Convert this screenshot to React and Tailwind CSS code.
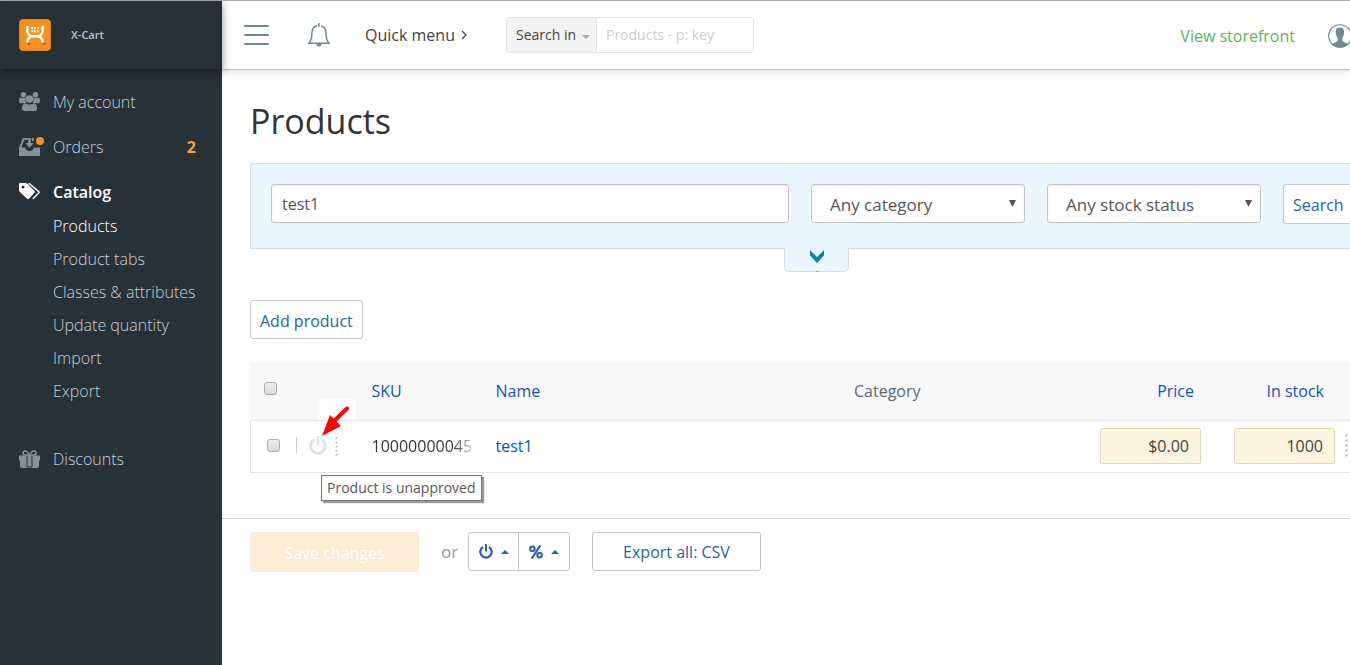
import React from "react";

const subItems = ["Product tabs", "Classes & attributes", "Update quantity", "Import", "Export"];

function Logo() {
  return (
    <svg viewBox="0 0 32 32" className="size-8 shrink-0" aria-hidden="true">
      <rect x="0.5" y="0.5" width="31" height="31" rx="3.5" fill="#f69320" stroke="#d9862a" />
      <g fill="none" stroke="#fff" strokeWidth="2.4">
        <path d="M8.400 7v5Q8.600 16.500 13 17.200 8.600 18.500 8.400 23.500M23.600 7v5Q23.400 16.500 19 17.200 23.400 18.500 23.600 23.500" />
        <path d="M11 17.200h10" />
      </g>
      <path d="M12.200 9h7.700M12.200 12.200h7.700" stroke="#fff" strokeWidth="2" strokeDasharray="1.900 1" />
      <path d="M9.800 25h.6M24.600 25h.6" stroke="#c8452b" strokeWidth="2" strokeLinecap="round" />
    </svg>
  );
}

function PeopleIcon() {
  return (
    <svg viewBox="0 0 21 19" className="h-[19px] w-[21px]" fill="currentColor" aria-hidden="true">
      <circle cx="4.500" cy="2.800" r="2.700" />
      <circle cx="16.500" cy="2.800" r="2.700" />
      <path d="M0 8.500Q0 5.500 2 5.500q2.200 1 4.300 0 .3.300.3.800-.6 3.200 1 5H1.500Q0 11.300 0 8.500zM21 8.500Q21 5.500 19 5.500q-2.200 1-4.300 0-.3.300-.3.800.6 3.200-1 5h6.100q1.500 0 1.500-2.800z" />
      <circle cx="10.500" cy="7" r="3.800" />
      <path d="M3 16.500q0-4.700 2.800-5 4.700 2.300 9.400 0 2.800.3 2.800 5 0 2.500-2.300 2.500H5.300Q3 19 3 16.500z" />
    </svg>
  );
}

function OrdersIcon() {
  return (
    <svg viewBox="0 0 25 19" className="h-[19px] w-[25px]" aria-hidden="true">
      <path d="M0 19v-8.500L4 1h5v1.800H5.300L2.300 10.500h3.900q1 3.500 4.300 3.500t4.300-3.500H21V19z" fill="#87909a" />
      <path d="M9.200 1h2.600v5h2.900l-4.200 5-4.200-5h2.900zM12.800 1h2v3h-2z" fill="#87909a" />
      <circle cx="21" cy="4" r="4" fill="#f69320" />
    </svg>
  );
}

function TagsIcon() {
  return (
    <svg viewBox="0 0 21 17" className="h-[17px] w-[21px]" aria-hidden="true">
      <path fillRule="evenodd" fill="#fff" d="M0 1.200Q0 0 1.200 0h5.300q1 0 1.800.8l7.100 7q1 1 0 2l-5.500 6q-.8.900-1.800 0L.8 8.900Q0 8 0 7zM4 2.400a1.500 1.500 0 100 3 1.500 1.500 0 000-3z" />
      <path fill="none" stroke="#fff" strokeWidth="1.400" d="M9.500.7h.8l9.300 7.700q.9.800.1 1.700l-5.900 6" />
    </svg>
  );
}

function GiftIcon() {
  return (
    <svg viewBox="0 0 21 18" className="h-[18px] w-[21px]" aria-hidden="true">
      <path d="M0 5.500h21v5h-1V16q0 2-2 2H3q-2 0-2-2v-5.500H0z" fill="#87909a" />
      <path d="M8 6v11h5V6" fill="none" stroke="#263238" strokeWidth="1" />
      <path d="M9.500 5.300Q3.800 5.500 4 2.800 4.500.5 6.800 1q2 .6 3.700 4.300Q12.200 1.600 14.200 1q2.300-.5 2.800 1.800.2 2.700-5.500 2.500" fill="none" stroke="#87909a" strokeWidth="1.600" />
    </svg>
  );
}

function BellIcon() {
  return (
    <svg viewBox="0 0 22 24" className="h-6 w-[22px]" fill="none" stroke="#6f8893" strokeWidth="1.500" aria-hidden="true">
      <path d="M9 2.700Q4.200 4 4 9.500 4 17.500.8 20.200h20.400Q18 17.500 18 9.500 17.800 4 13.200 2.900M11 0v3.800" />
      <path d="M8.300 20.500h5.400q-.5 3-2.700 3t-2.700-3z" fill="#6f8893" stroke="none" />
    </svg>
  );
}

function AvatarIcon() {
  return (
    <svg viewBox="0 0 24 24" className="size-6 shrink-0" aria-hidden="true">
      <circle cx="12" cy="12" r="11.300" fill="#fff" stroke="#6f8893" strokeWidth="1.100" />
      <path d="M7.600 7.500Q7.800 3.600 11.800 3.600t4.300 3.900q.3 3.800-1.800 6.500v2.700q1 1.300 6 3A11.300 11.300 0 0112 23.300a11.300 11.300 0 01-8.300-3.600q4.900-1.700 5.900-3V14Q7.400 11.300 7.600 7.500z" fill="#6f8893" />
    </svg>
  );
}

function PowerIcon({ className }) {
  return (
    <svg viewBox="0 0 18 19" className={className} fill="none" stroke="currentColor" aria-hidden="true">
      <path d="M5.200 3.800A7.300 7.300 0 1012.800 3.800" strokeWidth="2.900" />
      <path d="M9 0v9.500" strokeWidth="2.600" />
    </svg>
  );
}

function PercentIcon() {
  return (
    <svg viewBox="0 0 14 14" className="size-[14px]" fill="none" stroke="currentColor" aria-hidden="true">
      <circle cx="3.400" cy="3.700" r="2.300" strokeWidth="2" />
      <circle cx="10.600" cy="10.300" r="2.300" strokeWidth="2" />
      <path d="M11.300.5L2.700 13.500" strokeWidth="2.200" />
    </svg>
  );
}

function CaretUp() {
  return (
    <svg viewBox="0 0 8 4" className="h-1 w-2" fill="currentColor" aria-hidden="true">
      <path d="M0 4l4-4 4 4z" />
    </svg>
  );
}

function Dots({ className }) {
  return (
    <svg viewBox="0 0 3 24" className={className} stroke="#a9b0b4" strokeWidth="1.300" aria-hidden="true">
      <path d="M.5 2.500l2-2M.5 7.500l2-2M.5 12.500l2-2M.5 17.500l2-2M.5 22.500l2-2" />
    </svg>
  );
}

function FilterSelect({ label }) {
  return (
    <div className="relative w-[214px] shrink-0">
      <select
        aria-label={label}
        className="h-[39px] w-full appearance-none rounded-[3px] border border-[#c4c4c4] bg-white pt-[2px] pl-[18px] text-[17px] text-[#555] shadow-[inset_0_1px_2px_rgba(0,0,0,0.08)]"
      >
        <option>{label}</option>
      </select>
      <svg viewBox="0 0 7 7" className="pointer-events-none absolute top-4 right-[9px] size-[7px]" fill="#555" aria-hidden="true">
        <path d="M0 0h7L3.500 7z" />
      </svg>
    </div>
  );
}

const checkbox =
  "block size-[13px] appearance-none rounded-[3px] border border-[#acacac] bg-linear-to-b from-[#eeeeee] to-[#dadada]";
const cellInput =
  "block h-9 w-[101px] rounded-[2px] border border-[#e0dab8] bg-[#faf5dc] pr-[11px] text-right text-base text-[#444]";

function Sidebar() {
  return (
    <aside className="w-[222px] shrink-0 bg-[#263238] text-base font-light text-[#c5d0d6]">
      <div className="flex h-[68px] items-center gap-5 pl-[19px] text-[11px] font-semibold text-[#b7c3c9] shadow-[0_3px_8px_rgba(0,0,0,0.45)]">
        <Logo />
        <span>X-Cart</span>
      </div>
      <nav className="pt-[10px]">
        <a href="#account" className="flex h-[45px] items-center pl-[19px] text-[#87909a]">
          <span className="w-[34px]"><PeopleIcon /></span>
          <span className="text-[#c5d0d6]">My account</span>
        </a>
        <a href="#orders" className="flex h-[45px] items-center pr-[26px] pl-[19px]">
          <span className="w-[34px]"><OrdersIcon /></span>
          <span>Orders</span>
          <span className="ml-auto font-bold text-[#f9a13f]">2</span>
        </a>
        <a href="#catalog" className="flex h-[45px] items-center pl-[19px] font-semibold text-white">
          <span className="w-[34px]"><TagsIcon /></span>
          <span>Catalog</span>
        </a>
        <ul className="-mt-[5px] pl-[53px]">
          <li>
            <a href="#products" className="flex h-[33px] items-center text-white">Products</a>
          </li>
          {subItems.map((item) => (
            <li key={item}>
              <a href="#catalog" className="flex h-[33px] items-center">{item}</a>
            </li>
          ))}
        </ul>
        <a href="#discounts" className="mt-[29px] flex h-[45px] items-center pl-[19px]">
          <span className="w-[34px]"><GiftIcon /></span>
          <span>Discounts</span>
        </a>
      </nav>
    </aside>
  );
}

function Header() {
  return (
    <header className="flex h-[69px] items-center border-b border-[#b9b9b9] pl-[22px] shadow-[0_2px_8px_rgba(0,0,0,0.12)]">
      <button aria-label="Toggle menu" className="mr-[39px]">
        <svg viewBox="0 0 25 20" className="h-5 w-[25px]" stroke="#6f8893" strokeWidth="2" strokeLinecap="round" aria-hidden="true">
          <path d="M1 1h23M1 10h23M1 19h23" />
        </svg>
      </button>
      <button aria-label="Notifications" className="mr-[35px]"><BellIcon /></button>
      <button className="mr-[39px] flex items-center gap-[6px] text-base text-[#444]">
        Quick menu
        <svg viewBox="0 0 6 10" className="h-[10px] w-[6px]" fill="none" stroke="#444" strokeWidth="1.300" aria-hidden="true">
          <path d="M1 1l4 4-4 4" />
        </svg>
      </button>
      <div className="flex h-9 w-[248px] overflow-hidden rounded-[3px] border border-[#e4e4e4] text-sm">
        <button className="flex w-[90px] shrink-0 items-center gap-[6px] border-r border-[#e4e4e4] bg-[#f3f3f3] pl-[9px] font-medium whitespace-nowrap text-[#444]">
          Search in
          <svg viewBox="0 0 8 4" className="mt-1 h-1 w-2 shrink-0" fill="#aaa" aria-hidden="true">
            <path d="M0 0h8L4 4z" />
          </svg>
        </button>
        <input aria-label="Search" placeholder="Products - p: key" className="min-w-0 flex-1 px-[9px] placeholder:text-[#ccc]" />
      </div>
      <a href="#storefront" className="mr-[33px] ml-auto pt-[2px] text-base text-[#5bb55b]">View storefront</a>
      <button aria-label="Profile" className="w-[22px] overflow-hidden pt-px"><AvatarIcon /></button>
    </header>
  );
}

function Filters() {
  return (
    <section className="relative mt-[18px] flex gap-[22px] border border-r-0 border-[#d3dde3] bg-[#e9f6fe] pt-5 pb-6 pl-5">
      <input
        aria-label="Search keywords"
        defaultValue="test1"
        className="h-[39px] min-w-0 flex-1 rounded-[3px] border border-[#c4c4c4] bg-white px-[10px] text-base text-[#555] shadow-[inset_0_1px_2px_rgba(0,0,0,0.08)]"
      />
      <FilterSelect label="Any category" />
      <FilterSelect label="Any stock status" />
      <button className="h-10 w-[67px] shrink-0 rounded-l-[3px] border border-r-0 border-[#c4c4c4] bg-white pt-[2px] pl-[9px] text-left text-base text-[#2d5fa4]">
        Search
      </button>
      <div className="absolute inset-x-0 top-full flex justify-center pl-8">
        <button
          aria-label="Show more filters"
          className="flex h-6 w-[65px] justify-center rounded-b-[5px] border border-t-0 border-[#d3dde3] bg-[#e9f6fe] pt-[2px]"
        >
          <svg viewBox="0 0 14 22" className="h-[22px] w-[14px]" fill="#17839a" aria-hidden="true">
            <path d="M0 0l7 7 7-7v5.500L7 13 0 5.500z" />
            <path d="M5.800 21h2.400v1H5.800z" opacity=".5" />
          </svg>
        </button>
      </div>
    </section>
  );
}

function ProductTable() {
  return (
    <table className="mt-[23px] w-full table-fixed text-base">
      <colgroup>
        <col className="w-[111px]" />
        <col className="w-[124px]" />
        <col />
        <col className="w-[246px]" />
        <col className="w-[121px]" />
        <col className="w-[129px]" />
        <col className="w-[10px]" />
      </colgroup>
      <thead>
        <tr className="h-[58px] border-b border-[#e4e4e4] bg-[#f8f8f8] text-left text-[#1552b4]">
          <th className="pb-1 pl-[13px] font-normal">
            <input type="checkbox" aria-label="Select all products" className={checkbox} />
          </th>
          <th className="pl-[10px] font-normal"><a href="#sku">SKU</a></th>
          <th className="pl-[10px] font-normal"><a href="#name">Name</a></th>
          <th className="pl-[10px] font-normal text-[#5f6670]">Category</th>
          <th className="pr-[17px] text-right font-normal"><a href="#price">Price</a></th>
          <th className="pr-4 text-right font-normal"><a href="#stock">In stock</a></th>
          <th></th>
        </tr>
      </thead>
      <tbody>
        <tr className="h-[52px] border-b border-l border-[#e4e4e4]">
          <td className="relative">
            <div className="flex items-center pb-[2px] pl-4">
              <input type="checkbox" aria-label="Select test1" className={checkbox} />
              <span className="ml-4 h-4 w-px bg-[#ccc]" />
              <button aria-label="Product is unapproved" aria-describedby="approval-tip" className="ml-3 text-[#dde1ee]">
                <PowerIcon className="h-[19px] w-[18px]" />
              </button>
              <Dots className="mt-1 ml-2 h-5 w-[3px]" />
            </div>
            <div className="absolute -top-[22px] left-[67px] h-5 w-[38px] bg-white" />
            <svg viewBox="0 0 38 38" className="absolute -top-[22px] left-[67px] size-[38px]" aria-hidden="true">
              <path d="M29 9.500L16 22" stroke="#fe0000" strokeWidth="4" strokeLinecap="round" />
              <path d="M4 37L12 16l11 11z" fill="#fe0000" />
            </svg>
            <div
              id="approval-tip"
              role="tooltip"
              className="absolute top-[54px] left-[70px] z-10 flex h-[26px] items-center border border-[#767676] bg-white px-[5px] text-sm whitespace-nowrap text-[#575757] shadow-[2px_2px_1px_rgba(0,0,0,0.4)]"
            >
              Product is unapproved
            </div>
          </td>
          <td className="pl-[10px]">
            <span className="bg-linear-to-r from-[#333] from-80% to-[#ccc] bg-clip-text text-transparent">10000000045</span>
          </td>
          <td className="pl-[10px]"><a href="#test1" className="text-[#1552b4]">test1</a></td>
          <td></td>
          <td className="pl-[10px]"><input aria-label="Price" defaultValue="$0.00" className={cellInput} /></td>
          <td className="pl-[23px]"><input aria-label="In stock" defaultValue="1000" className={cellInput} /></td>
          <td className="pl-[5px]"><Dots className="h-6 w-[3px]" /></td>
        </tr>
      </tbody>
    </table>
  );
}

function ActionBar() {
  const groupButton = "flex w-[50px] items-center justify-center gap-2";
  return (
    <div className="mt-[45px] flex items-center border-t border-[#d0d0d0] pt-[13px] pl-7 text-base">
      <button disabled className="h-10 w-[169px] rounded-[3px] bg-[#fcebd5] pt-[2px] font-medium text-white">
        Save changes
      </button>
      <span className="ml-[22px] w-[27px] text-[17px] text-[#999]">or</span>
      <div className="flex h-[39px] divide-x divide-[#c4c4c4] rounded-[3px] border border-[#c4c4c4] text-[#2d5fa4]">
        <button aria-label="Change status" className={groupButton}>
          <PowerIcon className="h-[15px] w-[14px]" />
          <CaretUp />
        </button>
        <button aria-label="Change price" className={groupButton}>
          <PercentIcon />
          <CaretUp />
        </button>
      </div>
      <button className="ml-[22px] h-[39px] w-[169px] rounded-[3px] border border-[#c4c4c4] pt-[1px] text-[#2d5fa4]">
        Export all: CSV
      </button>
    </div>
  );
}

export default function App() {
  return (
    <div className="flex min-h-screen border-t border-[#b0b0b0] bg-white font-['Open_Sans',sans-serif]">
      <Sidebar />
      <div className="min-w-0 flex-1">
        <Header />
        <main>
          <div className="pl-7">
            <h1 className="pt-[27px] text-[34px] leading-[48px] text-[#333]">Products</h1>
            <Filters />
            <button className="mt-[51px] h-[39px] rounded-[3px] border border-[#c4c4c4] px-[9px] pt-[2px] text-base text-[#2d5fa4]">
              Add product
            </button>
            <ProductTable />
          </div>
          <ActionBar />
        </main>
      </div>
    </div>
  );
}
